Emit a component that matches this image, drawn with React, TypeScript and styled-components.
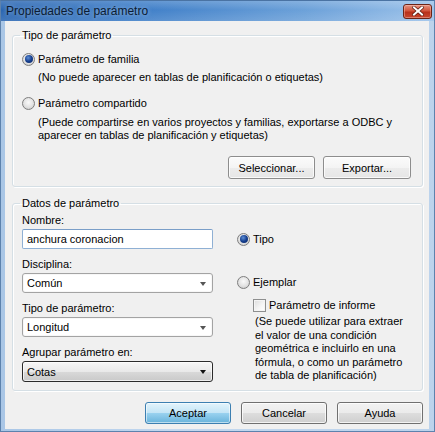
import React from 'react';
import styled, { createGlobalStyle, css } from 'styled-components';

const Global = createGlobalStyle`
  html, body { margin: 0; padding: 0; background: #ffffff; }
  body { font-family: "Liberation Sans", Arial, sans-serif; font-size: 11px; color: #000; }
  * { box-sizing: border-box; }
`;

const Window = styled.div`
  width: 435px;
  height: 432px;
  display: flex;
  flex-direction: column;
  background: linear-gradient(to right, #a9c6e6, #c3d8ef 40%, #bcd3ec);
  border: 1px solid #5d82ad;
  border-top-color: #4a73a3;
`;

const TitleBar = styled.div`
  height: 20px;
  flex: none;
  display: flex;
  align-items: center;
  justify-content: space-between;
  padding: 0 2px 0 5px;
  background:
    linear-gradient(to bottom, rgba(255,255,255,0.18), rgba(255,255,255,0) 45%, rgba(255,255,255,0.12)),
    linear-gradient(to right, #2a66b2 0%, #3d7dc7 30%, #6ca1d9 70%, #9cc2ea 100%);
`;

const TitleText = styled.span`
  font-family: "Liberation Sans", Arial, sans-serif;
  font-size: 12px;
  color: #0b1c33;
  text-shadow: 0 0 4px rgba(255,255,255,0.55);
`;

const CloseButton = styled.div`
  width: 29px;
  height: 15px;
  border: 1px solid #6b2417;
  border-radius: 3px;
  background: linear-gradient(to bottom, #e69381 0%, #d1543b 45%, #b8301a 55%, #c8472f 100%);
  box-shadow: inset 0 0 0 1px rgba(255,210,200,0.4);
  display: flex;
  align-items: center;
  justify-content: center;
`;

const Client = styled.div`
  flex: 1;
  margin: 0 5px 3px 4px;
  background: #f0f0f0;
  padding: 6px 6px 5px 7px;
  display: flex;
  flex-direction: column;
`;

const Group = styled.fieldset<{ $top?: number }>`
  margin: ${p => p.$top ?? 0}px 0 0 0;
  padding: 0 0 7px 9px;
  border: 1px solid #d5dfe5;
  border-radius: 3px;
  box-shadow: inset 1px 1px 0 #ffffff, 1px 1px 0 #ffffff;
  min-width: 0;
`;

const Legend = styled.legend`
  padding: 0 2px;
  margin-left: -2px;
  line-height: 16px;
  font-size: 11px;
`;

const Radio = styled.span<{ $checked?: boolean }>`
  width: 13px;
  height: 13px;
  flex: none;
  border-radius: 50%;
  border: 1px solid #7e7e7e;
  background: radial-gradient(circle at 50% 40%, #fafafa 0%, #e2e2e2 55%, #c2c2c2 100%);
  display: inline-flex;
  align-items: center;
  justify-content: center;
  ${p => p.$checked && css`
    &::after {
      content: '';
      width: 8px;
      height: 8px;
      border-radius: 50%;
      background: radial-gradient(circle at 40% 35%, #5e8fd6 0%, #163f8f 50%, #0a2460 100%);
    }
  `}
`;

const OptionRow = styled.div<{ $top?: number; $indent?: number }>`
  display: flex;
  align-items: center;
  gap: 3px;
  height: 16px;
  margin-top: ${p => p.$top ?? 0}px;
  margin-left: ${p => p.$indent ?? 0}px;
  font-size: 11px;
`;

const Note = styled.div<{ $top?: number; $indent?: number; $lh?: number }>`
  margin-top: ${p => p.$top ?? 0}px;
  margin-left: ${p => p.$indent ?? 0}px;
  line-height: ${p => p.$lh ?? 14}px;
  font-size: 11px;
  white-space: nowrap;
`;

const ButtonRow = styled.div<{ $top?: number; $gap?: number; $right?: number }>`
  display: flex;
  justify-content: flex-end;
  gap: ${p => p.$gap ?? 8}px;
  margin-top: ${p => p.$top ?? 0}px;
  margin-right: ${p => p.$right ?? 0}px;
`;

const Button = styled.button<{ $variant?: 'default' | 'light' | 'normal'; $w?: number; $h?: number }>`
  width: ${p => p.$w ?? 86}px;
  height: ${p => p.$h ?? 22}px;
  padding: 0;
  font-family: inherit;
  font-size: 11px;
  color: #000;
  border-radius: 3px;
  border: 1px solid #707070;
  box-shadow: inset 0 0 0 1px rgba(255,255,255,0.75);
  background: linear-gradient(to bottom, #f2f2f2 0%, #ebebeb 50%, #dddddd 51%, #cfcfcf 100%);
  ${p => p.$variant === 'light' && css`
    border-color: #8d8d8d;
    background: linear-gradient(to bottom, #fbfbfb 0%, #f4f4f4 50%, #ececec 51%, #e6e6e6 100%);
  `}
  ${p => p.$variant === 'default' && css`
    border-color: #3c7fb1;
    box-shadow: inset 0 0 0 1px rgba(255,255,255,0.55);
    background: linear-gradient(to bottom, #e3f4fc 0%, #c4e5f6 48%, #98d1ef 52%, #68b3db 100%);
  `}
`;

const DataBody = styled.div`
  display: flex;
  gap: 24px;
`;

const Column = styled.div<{ $w?: number; $top?: number }>`
  display: flex;
  flex-direction: column;
  width: ${p => (p.$w ? `${p.$w}px` : 'auto')};
  padding-top: ${p => p.$top ?? 0}px;
`;

const Field = styled.div<{ $top?: number }>`
  display: flex;
  flex-direction: column;
  margin-top: ${p => p.$top ?? 0}px;
`;

const Label = styled.label`
  line-height: 14px;
  margin-bottom: 2px;
  font-size: 11px;
`;

const TextBox = styled.div`
  height: 20px;
  border: 1px solid #8fb0d4;
  border-top-color: #7a9ec8;
  border-radius: 2px;
  background: #fff;
  padding: 0 4px;
  display: flex;
  align-items: center;
  font-size: 11px;
`;

const Select = styled.div<{ $hot?: boolean }>`
  height: 20px;
  border: 1px solid #a3a3a3;
  border-radius: 3px;
  background: #fff;
  box-shadow: inset 0 0 0 1px #f7f7f7;
  padding: 0 6px 0 4px;
  display: flex;
  align-items: center;
  justify-content: space-between;
  font-size: 11px;
  ${p => p.$hot && css`
    height: 21px;
    border-color: #2b2b2b;
    box-shadow: inset 0 0 0 1px rgba(255,255,255,0.7);
    background: linear-gradient(to bottom, #f6f6f6 0%, #e9e9e9 50%, #d9d9d9 51%, #c9c9c9 100%);
  `}
`;

const Arrow = styled.span<{ $dark?: boolean }>`
  width: 0;
  height: 0;
  border-left: 3.5px solid transparent;
  border-right: 3.5px solid transparent;
  border-top: 4px solid ${p => (p.$dark ? '#111' : '#555')};
  margin-top: 1px;
`;

const CheckBox = styled.span`
  width: 13px;
  height: 13px;
  flex: none;
  border: 1px solid #8e8f8f;
  background: linear-gradient(135deg, #dcdcdc 0%, #f6f6f6 60%, #ffffff 100%);
  box-shadow: inset 0 0 0 1px #f4f4f4;
`;

export default function App() {
  return (
    <>
      <Global />
      <Window>
        <TitleBar>
          <TitleText>Propiedades de parámetro</TitleText>
          <CloseButton>
            <svg width="12" height="10" viewBox="0 0 12 10">
              <path d="M2 1.5 L10 8.5 M10 1.5 L2 8.5" stroke="#5a1a10" strokeWidth="3.4" strokeLinecap="square" />
              <path d="M2 1.5 L10 8.5 M10 1.5 L2 8.5" stroke="#ffffff" strokeWidth="2" strokeLinecap="square" />
            </svg>
          </CloseButton>
        </TitleBar>
        <Client>
          <Group>
            <Legend>Tipo de parámetro</Legend>
            <OptionRow $top={8}>
              <Radio $checked />
              <span>Parámetro de familia</span>
            </OptionRow>
            <Note $top={3} $indent={16}>(No puede aparecer en tablas de planificación o etiquetas)</Note>
            <OptionRow $top={11}>
              <Radio />
              <span>Parámetro compartido</span>
            </OptionRow>
            <Note $top={5} $indent={16} $lh={13}>
              (Puede compartirse en varios proyectos y familias, exportarse a ODBC y
              <br />
              aparecer en tablas de planificación y etiquetas)
            </Note>
            <ButtonRow $top={14} $right={11} $gap={8}>
              <Button $variant="light" $w={87} $h={23}>Seleccionar...</Button>
              <Button $variant="light" $w={88} $h={23}>Exportar...</Button>
            </ButtonRow>
          </Group>

          <Group $top={8}>
            <Legend>Datos de parámetro</Legend>
            <DataBody>
              <Column $w={191} $top={2}>
                <Field>
                  <Label>Nombre:</Label>
                  <TextBox>anchura coronacion</TextBox>
                </Field>
                <Field $top={8}>
                  <Label>Disciplina:</Label>
                  <Select>
                    <span>Común</span>
                    <Arrow />
                  </Select>
                </Field>
                <Field $top={8}>
                  <Label>Tipo de parámetro:</Label>
                  <Select>
                    <span>Longitud</span>
                    <Arrow />
                  </Select>
                </Field>
                <Field $top={8}>
                  <Label>Agrupar parámetro en:</Label>
                  <Select $hot>
                    <span>Cotas</span>
                    <Arrow $dark />
                  </Select>
                </Field>
              </Column>
              <Column $top={20}>
                <OptionRow>
                  <Radio $checked />
                  <span>Tipo</span>
                </OptionRow>
                <OptionRow $top={27}>
                  <Radio />
                  <span>Ejemplar</span>
                </OptionRow>
                <OptionRow $top={7} $indent={16}>
                  <CheckBox />
                  <span>Parámetro de informe</span>
                </OptionRow>
                <Note $top={2} $indent={18} $lh={13.5}>
                  (Se puede utilizar para extraer
                  <br />
                  el valor de una condición
                  <br />
                  geométrica e incluirlo en una
                  <br />
                  fórmula, o como un parámetro
                  <br />
                  de tabla de planificación)
                </Note>
              </Column>
            </DataBody>
          </Group>

          <ButtonRow $top={11} $gap={10}>
            <Button $variant="default">Aceptar</Button>
            <Button>Cancelar</Button>
            <Button>Ayuda</Button>
          </ButtonRow>
        </Client>
      </Window>
    </>
  );
}
